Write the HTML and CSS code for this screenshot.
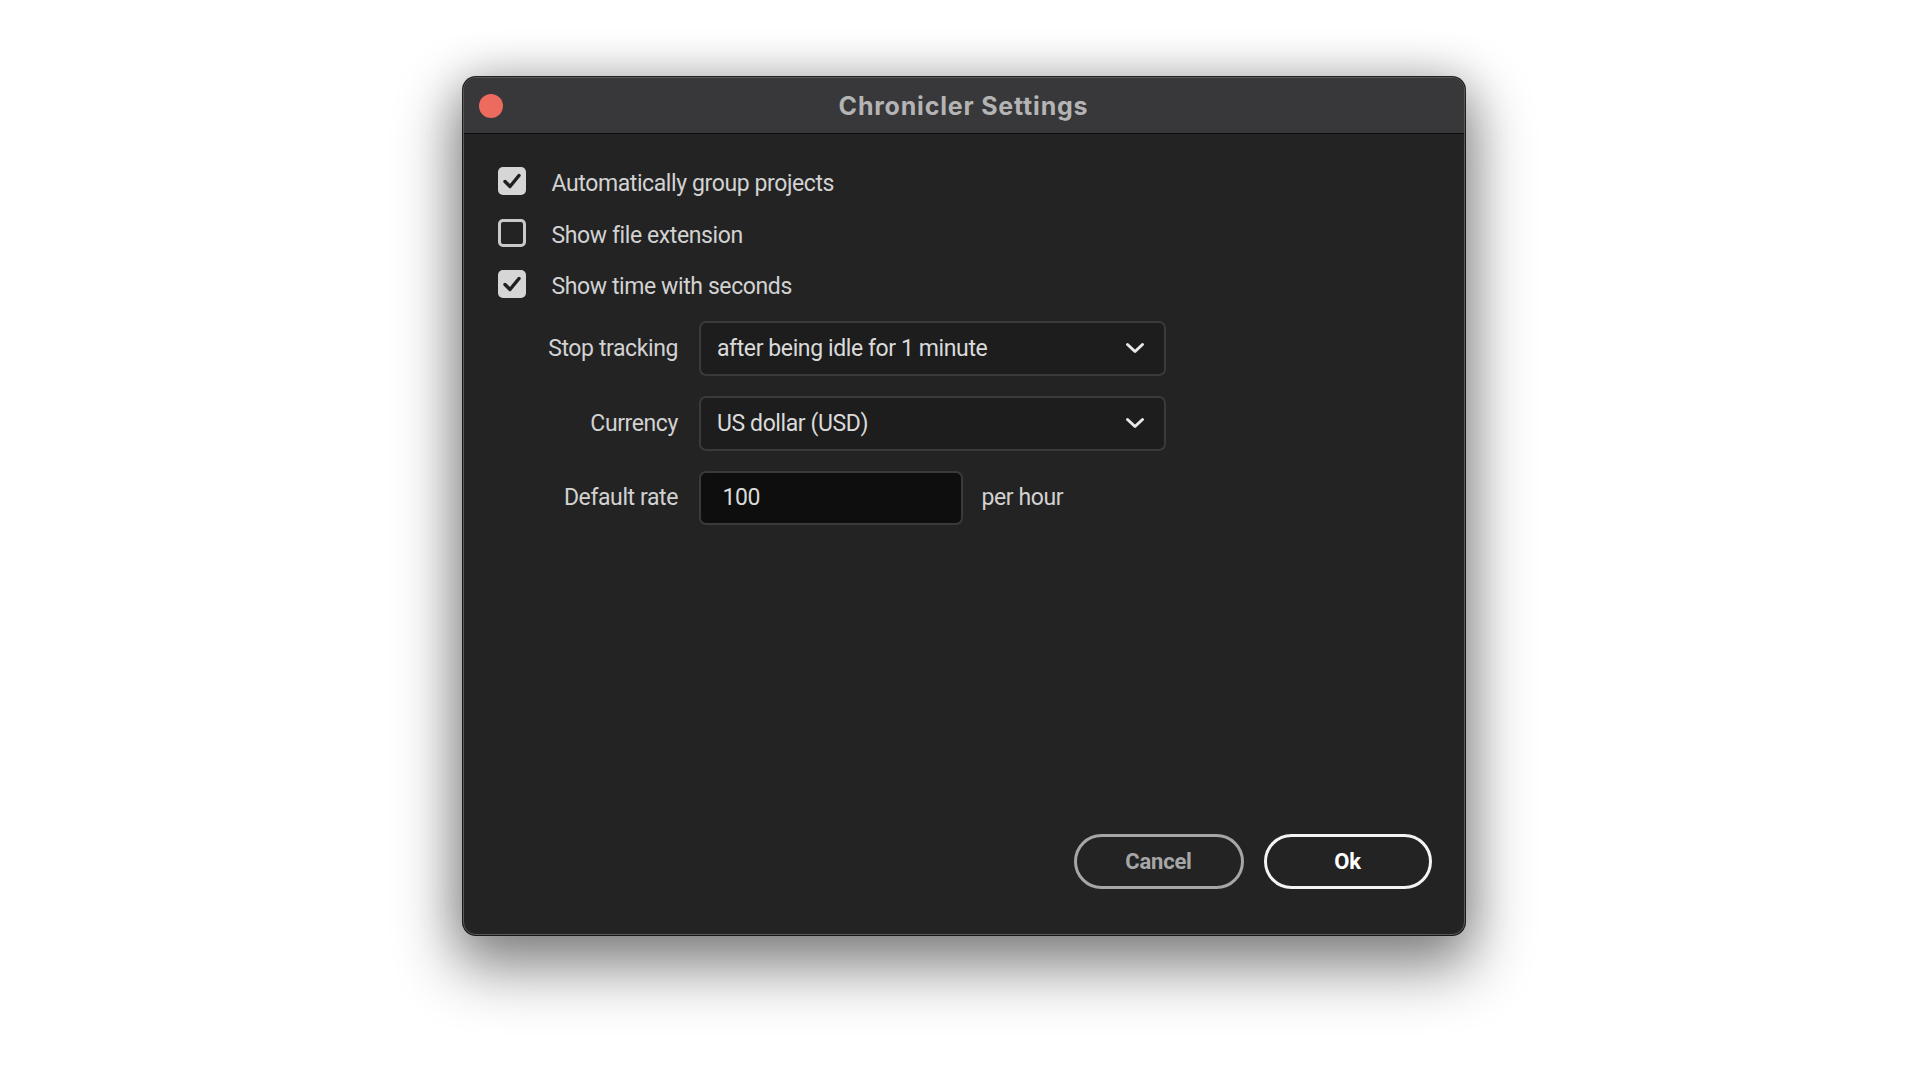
FILE: index.html
```html
<!DOCTYPE html>
<html lang="en">
<head>
<meta charset="utf-8">
<title>Chronicler Settings</title>
<link rel="stylesheet" href="styles.css">
</head>
<body>
<div class="window">
  <div class="titlebar">
    <span class="close"></span>
    <div class="title">Chronicler Settings</div>
    <span></span>
  </div>
  <div class="content">
    <div class="options">
      <div class="option">
        <span class="checkbox checked"><svg viewBox="0 0 28 28" width="28" height="28"><path d="M7 14.5 L12 19.5 L21 8.5" fill="none" stroke="#1f1f1f" stroke-width="3.4" stroke-linecap="round" stroke-linejoin="round"/></svg></span>
        <span class="otext">Automatically group projects</span>
      </div>
      <div class="option">
        <span class="checkbox unchecked"></span>
        <span class="otext">Show file extension</span>
      </div>
      <div class="option">
        <span class="checkbox checked"><svg viewBox="0 0 28 28" width="28" height="28"><path d="M7 14.5 L12 19.5 L21 8.5" fill="none" stroke="#1f1f1f" stroke-width="3.4" stroke-linecap="round" stroke-linejoin="round"/></svg></span>
        <span class="otext">Show time with seconds</span>
      </div>
    </div>
    <div class="form">
      <div class="flabel">Stop tracking</div>
      <div class="select">
        <span>after being idle for 1 minute</span>
        <svg viewBox="0 0 20 12" width="20" height="12"><path d="M2.5 2.5 L10 9.5 L17.5 2.5" fill="none" stroke="#e8e8e8" stroke-width="3" stroke-linecap="round" stroke-linejoin="round"/></svg>
      </div>
      <div class="flabel">Currency</div>
      <div class="select">
        <span>US dollar (USD)</span>
        <svg viewBox="0 0 20 12" width="20" height="12"><path d="M2.5 2.5 L10 9.5 L17.5 2.5" fill="none" stroke="#e8e8e8" stroke-width="3" stroke-linecap="round" stroke-linejoin="round"/></svg>
      </div>
      <div class="flabel">Default rate</div>
      <div class="input-row">
        <div class="input">100</div>
        <span class="unit">per hour</span>
      </div>
    </div>
    <div class="footer">
      <button class="btn cancel">Cancel</button>
      <button class="btn ok">Ok</button>
    </div>
  </div>
</div>
</body>
</html>
```

FILE: styles.css
```css
html, body {
  margin: 0;
  background: #ffffff;
}

html {
  height: 100%;
}

body {
  min-height: 100%;
  box-sizing: border-box;
  display: flex;
  justify-content: center;
  align-items: flex-start;
  padding-top: 77px;
  font-family: Roboto, "Liberation Sans", sans-serif;
  overflow: hidden;
}

.window {
  width: 1002px;
  height: 858px;
  flex: none;
  box-sizing: border-box;
  border: 1px solid #5a5a5a;
  border-radius: 13px;
  background: #232323;
  display: flex;
  flex-direction: column;
  overflow: hidden;
  box-shadow: 0 0 0 1px rgba(0, 0, 0, 0.85), 0 26px 60px 8px rgba(0, 0, 0, 0.45), 0 0 45px rgba(0, 0, 0, 0.18);
}

.titlebar {
  height: 55px;
  border-bottom: 1px solid #0e0e0e;
  background: #38383a;
  display: grid;
  grid-template-columns: 1fr auto 1fr;
  align-items: center;
  padding: 0 15px;
}

.close {
  width: 24px;
  height: 24px;
  border-radius: 50%;
  background: #ed6a5e;
}

.title {
  font-family: Inter, "Liberation Sans", sans-serif;
  font-weight: 700;
  font-size: 25px;
  letter-spacing: 0.8px;
  color: #b4b4b4;
}

.content {
  flex: 1;
  display: flex;
  flex-direction: column;
  padding: 33px 32px 45px 34px;
}

.options {
  display: flex;
  flex-direction: column;
  gap: 23.5px;
}

.option {
  display: flex;
  align-items: center;
  gap: 26px;
  height: 28px;
  font-size: 23px;
  letter-spacing: -0.4px;
  color: #d2d2d2;
}

.otext {
  padding-top: 5px;
}

.checkbox {
  width: 28px;
  height: 28px;
  box-sizing: border-box;
  border-radius: 5px;
  display: block;
}

.checkbox svg {
  display: block;
}

.checked {
  background: #d6d6d6;
}

.unchecked {
  border: 3px solid #c9c9c9;
}

.form {
  display: grid;
  grid-template-columns: 126px 467px;
  column-gap: 20.5px;
  row-gap: 20px;
  margin: 22.5px 0 0 54.5px;
  align-items: center;
  font-size: 23px;
  letter-spacing: -0.4px;
  color: #d2d2d2;
}

.flabel {
  justify-self: end;
  text-align: right;
  white-space: nowrap;
}

.select {
  height: 55px;
  box-sizing: border-box;
  border: 2px solid #3a3a3a;
  border-radius: 7px;
  background: #1d1d1d;
  display: flex;
  align-items: center;
  justify-content: space-between;
  padding: 0 19px 0 16.5px;
  color: #dadada;
}

.select svg {
  display: block;
}

.input-row {
  display: flex;
  align-items: center;
  gap: 19px;
}

.input {
  width: 264px;
  height: 54px;
  box-sizing: border-box;
  border: 2px solid #3a3a3a;
  border-radius: 7px;
  background: #0e0e0e;
  padding-left: 22px;
  display: flex;
  align-items: center;
  color: #dadada;
}

.footer {
  margin-top: auto;
  display: flex;
  justify-content: flex-end;
  gap: 20px;
}

.btn {
  height: 55px;
  width: 170px;
  border-radius: 28px;
  border: 3px solid #a6a6a6;
  background: transparent;
  font-family: Roboto, "Liberation Sans", sans-serif;
  font-weight: 700;
  font-size: 22px;
  letter-spacing: -0.2px;
  color: #a6a6a6;
  padding: 0;
}

.btn.ok {
  width: 168px;
  border-color: #f4f4f4;
  color: #ffffff;
}
```
